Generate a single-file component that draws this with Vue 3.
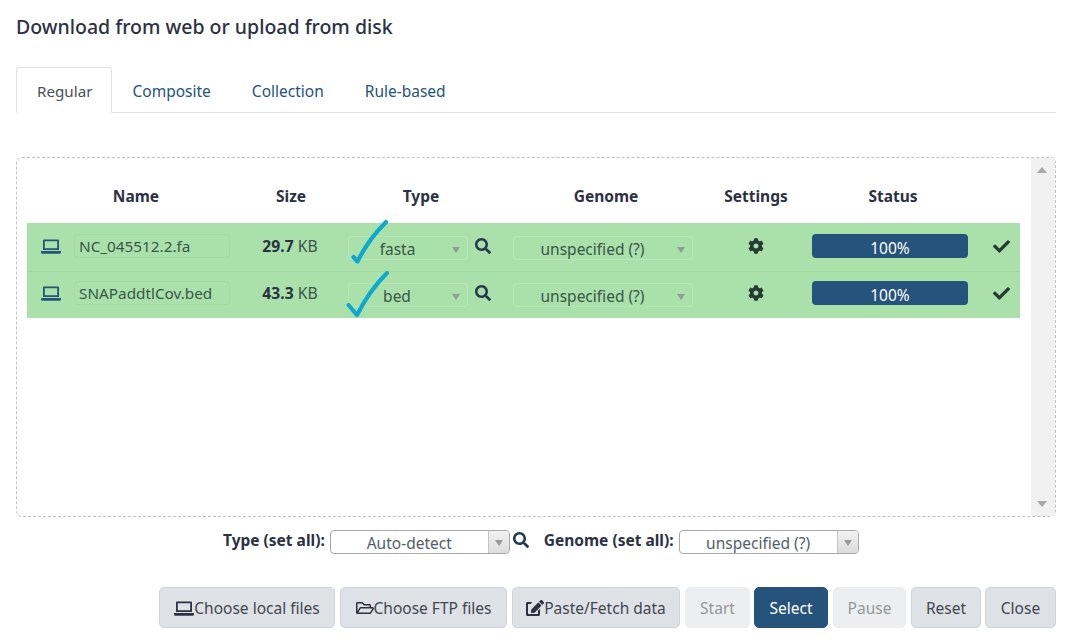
<script setup>
const rows = [
  { name: 'NC_045512.2.fa', num: '29.7', type: 'fasta', typeClass: 'type-fasta', markClass: 'mark-a', tick: 'M3.5 37 L7.5 41.5 Q18 20 36 2' },
  { name: 'SNAPaddtlCov.bed', num: '43.3', type: 'bed', typeClass: 'type-bed', markClass: 'mark-b', tick: 'M3.5 35 L12 45 Q24 21 42 3' }
]
const heads = ['Name', 'Size', 'Type', 'Genome', 'Settings', 'Status']
const tabs = ['Composite', 'Collection', 'Rule-based']
const search = 'M505 442.7L405.3 343c-4.5-4.5-10.6-7-17-7H372c27.6-35.3 44-79.7 44-128C416 93.1 322.9 0 208 0S0 93.1 0 208s93.1 208 208 208c48.3 0 92.7-16.4 128-44v16.3c0 6.4 2.5 12.5 7 17l99.7 99.7c9.4 9.4 24.6 9.4 33.9 0l28.3-28.3c9.4-9.4 9.4-24.6.1-34zM208 336c-70.7 0-128-57.2-128-128 0-70.7 57.2-128 128-128 70.7 0 128 57.2 128 128 0 70.7-57.2 128-128 128z'
const check = 'M173.898 439.404l-166.4-166.4c-9.997-9.997-9.997-26.206 0-36.204l36.203-36.204c9.997-9.998 26.207-9.998 36.204 0L192 312.69 432.095 72.596c9.997-9.997 26.207-9.997 36.204 0l36.203 36.204c9.997 9.997 9.997 26.206 0 36.204l-294.4 294.401c-9.998 9.997-26.207 9.997-36.204-.001z'
const cog = 'M487.4 315.7l-42.6-24.6c4.3-23.2 4.3-47 0-70.2l42.6-24.6c4.9-2.8 7.1-8.6 5.5-14-11.1-35.6-30-67.8-54.7-94.6-3.8-4.1-10-5.1-14.8-2.3L380.8 110c-17.9-15.4-38.5-27.3-60.8-35.1V25.8c0-5.6-3.9-10.5-9.4-11.7-36.7-8.2-74.3-7.8-109.2 0-5.5 1.2-9.4 6.1-9.4 11.7V75c-22.2 7.9-42.8 19.8-60.8 35.1L88.7 85.5c-4.9-2.8-11-1.9-14.8 2.3-24.7 26.7-43.6 58.9-54.7 94.6-1.7 5.4.6 11.2 5.5 14L67.3 221c-4.3 23.2-4.3 47 0 70.2l-42.6 24.6c-4.9 2.8-7.1 8.6-5.5 14 11.1 35.6 30 67.8 54.7 94.6 3.8 4.1 10 5.1 14.8 2.3l42.6-24.6c17.9 15.4 38.5 27.3 60.8 35.1v49.2c0 5.6 3.9 10.5 9.4 11.7 36.7 8.2 74.3 7.8 109.2 0 5.5-1.2 9.4-6.1 9.4-11.7v-49.2c22.2-7.9 42.8-19.8 60.8-35.1l42.6 24.6c4.9 2.8 11 1.9 14.8-2.3 24.7-26.7 43.6-58.9 54.7-94.6 1.5-5.5-.7-11.3-5.6-14.1zM256 336c-44.1 0-80-35.9-80-80s35.9-80 80-80 80 35.9 80 80-35.9 80-80 80z'
const folder = 'M527.9 224H480v-48c0-26.5-21.5-48-48-48H272l-64-64H48C21.5 64 0 85.5 0 112v288c0 26.5 21.5 48 48 48h400c16.5 0 31.9-8.5 40.7-22.6l79.9-128c20-31.9-3-73.4-40.7-73.4zM48 118c0-3.3 2.7-6 6-6h134.1l64 64H426c3.3 0 6 2.7 6 6v42H152c-16.8 0-32.4 8.8-41.1 23.2L48 351.4zm400 282H72l77.2-128H528z'
const edit = 'M402.6 83.2l90.2 90.2c3.8 3.8 3.8 10 0 13.8L274.4 405.6l-92.8 10.3c-12.4 1.4-22.9-9.1-21.5-21.5l10.3-92.8L388.8 83.2c3.8-3.8 10-3.8 13.8 0zm162-22.9l-48.8-48.8c-15.2-15.2-39.9-15.2-55.2 0l-35.4 35.4c-3.8 3.8-3.8 10 0 13.8l90.2 90.2c3.8 3.8 10 3.8 13.8 0l35.4-35.4c15.2-15.3 15.2-40 0-55.2zM384 346.2V448H64V128h73.1c3.2 0 6.2-1.3 8.5-3.5l40-40c7.6-7.6 2.2-20.5-8.5-20.5H48C21.5 64 0 85.5 0 112v352c0 26.5 21.5 48 48 48h352c26.5 0 48-21.5 48-48V306.2c0-10.7-12.9-16-20.5-8.5l-40 40c-2.2 2.3-3.5 5.3-3.5 8.5z'
const laptop = 'M3 2.5h14a1 1 0 0 1 1 1V13H2V3.5a1 1 0 0 1 1-1zM3.8 4.2v7.1h12.4V4.2zM0 14h20v1.2a1.5 1.5 0 0 1-1.5 1.5h-17A1.5 1.5 0 0 1 0 15.2z'
</script>

<template>
  <div class="modal">
    <h1 class="title">Download from web or upload from disk</h1>
    <nav class="tabs">
      <span class="tab active">Regular</span>
      <span v-for="t in tabs" :key="t" class="tab">{{ t }}</span>
    </nav>

    <section class="drop">
      <div class="list">
        <div class="head">
          <span v-for="h in heads" :key="h">{{ h }}</span>
        </div>
        <div class="rows">
          <div v-for="r in rows" :key="r.name" class="row">
            <span class="cell center">
              <svg class="ic-laptop" viewBox="0 0 20 18"><path :d="laptop" fill-rule="evenodd" /></svg>
            </span>
            <span class="name">{{ r.name }}</span>
            <span class="size"><b>{{ r.num }}</b> KB</span>
            <span class="select">
              <span class="sel-text" :class="r.typeClass">{{ r.type }}</span><i class="caret"></i>
            </span>
            <span class="cell search-cell">
              <svg class="ic-search" viewBox="0 0 512 512"><path :d="search" /></svg>
            </span>
            <span class="select">
              <span class="sel-text genome">unspecified (?)</span><i class="caret"></i>
            </span>
            <span class="cell gear-cell">
              <svg class="ic-gear" viewBox="0 0 512 512"><path :d="cog" /></svg>
            </span>
            <span class="bar">100%</span>
            <span class="cell check-cell">
              <svg class="ic-check" viewBox="0 0 512 512"><path :d="check" /></svg>
            </span>
            <svg class="mark" :class="r.markClass" viewBox="0 0 48 48">
              <path :d="r.tick" fill="none" stroke="#0fa8cf" stroke-width="4.2" stroke-linecap="round" stroke-linejoin="round" />
            </svg>
          </div>
        </div>
      </div>
      <aside class="scroll">
        <i class="arrow up"></i>
        <i class="arrow down"></i>
      </aside>
    </section>

    <div class="setall">
      <b>Type (set all):</b>
      <span class="box type-box"><span class="box-text">Auto-detect</span><span class="box-btn"><i class="caret"></i></span></span>
      <svg class="ic-search big" viewBox="0 0 512 512"><path :d="search" /></svg>
      <b class="genome-label">Genome (set all):</b>
      <span class="box genome-box"><span class="box-text">unspecified (?)</span><span class="box-btn"><i class="caret"></i></span></span>
    </div>

    <div class="actions">
      <button class="btn local"><svg class="btn-ic lap" viewBox="0 0 20 18"><path :d="laptop" fill-rule="evenodd" /></svg>Choose local files</button>
      <button class="btn ftp"><svg class="btn-ic" viewBox="0 0 576 512"><path :d="folder" /></svg>Choose FTP files</button>
      <button class="btn paste"><svg class="btn-ic" viewBox="0 0 576 512"><path :d="edit" /></svg>Paste/Fetch data</button>
      <button class="btn start off">Start</button>
      <button class="btn select-btn">Select</button>
      <button class="btn pause off">Pause</button>
      <button class="btn reset">Reset</button>
      <button class="btn close">Close</button>
    </div>
  </div>
</template>

<style>
html, body { margin: 0; background: #fffffe; }
</style>

<style scoped>
.modal {
  width: 1071px;
  height: 643px;
  box-sizing: border-box;
  padding: 0 15px 0 16px;
  overflow: hidden;
  font-family: "Noto Sans", "Open Sans", sans-serif;
  font-size: 15.5px;
  color: #2c3143;
  background: #fff;
}
.title {
  margin: 0;
  padding-top: 13px;
  height: 67px;
  box-sizing: border-box;
  font-size: 19.5px;
  line-height: 28px;
  font-weight: 500;
  color: #2c3143;
}
.tabs {
  display: flex;
  height: 46px;
  box-sizing: border-box;
  border-bottom: 1px solid #dee2e6;
}
.tab {
  height: 46px;
  box-sizing: border-box;
  padding: 11px 19.5px 0;
  line-height: 24px;
  font-size: 15.5px;
  color: #25537b;
  border: 1px solid transparent;
}
.tab.active {
  width: 96px;
  padding: 11px 0 0 20px;
  font-size: 15.2px;
  color: #495057;
  background: #fff;
  border-color: #dee2e6 #dee2e6 #fff;
  border-radius: 4px 4px 0 0;
}
.drop {
  margin-top: 44px;
  height: 360px;
  box-sizing: border-box;
  display: flex;
  border: 1px dashed #bfc3c7;
  border-radius: 6px;
  background: #fff;
}
.list {
  flex: 1;
  padding: 0 10px;
}
.head {
  display: grid;
  grid-template-columns: 218px 92px 168px 202px 98px 176px;
  height: 65px;
  align-items: center;
  padding-top: 11px;
  box-sizing: border-box;
  text-align: center;
  font-weight: 700;
  font-size: 15.5px;
  color: #2c3143;
}
.rows {
  width: 993px;
  background: #aae1aa;
}
.row {
  position: relative;
  display: grid;
  box-sizing: border-box;
  grid-template-columns: 47px 156px 118px 120px 45px 180px 119px 156px 52px;
  align-items: center;
  height: 48px;
  padding-bottom: 2px;
  color: #2c4a3c;
}
.row + .row {
  height: 47px;
  padding-bottom: 4px;
  border-top: 1px solid #9fd69f;
}
.center { display: flex; justify-content: center; }
.ic-laptop { width: 20px; height: 18px; fill: #25537b; }
.name {
  height: 24px;
  box-sizing: border-box;
  padding-left: 4px;
  line-height: 22px;
  font-size: 15.3px;
  border: 1px solid #a3daa3;
  border-radius: 4px;
  color: #38564a;
  white-space: nowrap;
  overflow: hidden;
}
.size {
  text-align: center;
  padding-left: 2px;
  font-size: 15.7px;
  color: #38564a;
}
.size b { color: #2c3143; }
.select {
  position: relative;
  display: block;
  height: 24px;
  margin-top: 4px;
  box-sizing: border-box;
  border: 1px solid #b9e6b9;
  border-radius: 4px;
  line-height: 24px;
}
.sel-text { display: block; font-size: 15.5px; color: #38564a; text-align: center; }
.type-fasta { padding-right: 21px; }
.type-bed { padding-right: 22px; }
.genome { padding-right: 21px; }
.select .caret { position: absolute; right: 7px; top: 10px; }
.caret {
  display: block;
  width: 0;
  height: 0;
  border-left: 4px solid transparent;
  border-right: 4px solid transparent;
  border-top: 6px solid #8aa090;
}
.search-cell { display: flex; padding: 0 0 1px 7px; }
.ic-search { width: 16px; height: 16px; fill: #243a52; }
.gear-cell { display: flex; justify-content: center; padding: 0 0 1px 6px; }
.ic-gear { width: 16px; height: 16px; fill: #243a35; }
.bar {
  height: 24px;
  margin-top: 0;
  border-radius: 4px;
  background: #25537b;
  color: #fff;
  text-align: center;
  line-height: 28px;
  font-size: 15.5px;
}
.check-cell { display: flex; justify-content: flex-end; padding: 0 10px 0 0; }
.ic-check { width: 17px; height: 17px; fill: #243a35; }
.mark { position: absolute; width: 48px; height: 48px; }
.mark-a { left: 323px; top: -3px; }
.mark-b { left: 318px; top: -2px; }
.scroll {
  position: relative;
  width: 24px;
  background: #f1f1f1;
}
.arrow {
  position: absolute;
  left: 6px;
  width: 0;
  height: 0;
  border-left: 5px solid transparent;
  border-right: 5px solid transparent;
}
.arrow.up { top: 9px; border-bottom: 6px solid #a8a8a8; }
.arrow.down { bottom: 9px; border-top: 6px solid #a8a8a8; }
.setall {
  display: flex;
  align-items: flex-start;
  height: 70px;
  padding: 12px 0 0 207px;
  box-sizing: border-box;
  font-size: 15.5px;
  line-height: 23px;
  color: #2c3143;
}
.box {
  position: relative;
  display: block;
  height: 24px;
  box-sizing: border-box;
  margin-top: 1px;
  border: 1px solid #a9a9a9;
  border-radius: 4px;
  background: #fff;
  color: #555d66;
  font-size: 15.5px;
  line-height: 23px;
}
.type-box { width: 180px; margin-left: 5px; }
.genome-box { width: 180px; margin-left: 5px; }
.box-text { display: block; text-align: center; padding-right: 21px; line-height: 24px; }
.box-btn {
  position: absolute;
  right: 0;
  top: 0;
  bottom: 0;
  width: 21px;
  box-sizing: border-box;
  border-left: 1px solid #c4c4c4;
  border-radius: 0 3px 3px 0;
  background: linear-gradient(#f2f2f2, #dcdcdc);
  display: flex;
  align-items: center;
  justify-content: center;
  padding-top: 2px;
}
.box-btn .caret { border-top-color: #9a9a9a; }
.ic-search.big { width: 16px; height: 16px; margin: 3px 0 0 3px; fill: #243a52; }
.genome-label { margin-left: 15px; }
.actions {
  display: flex;
  justify-content: flex-end;
  gap: 5px;
}
.btn {
  height: 41px;
  box-sizing: border-box;
  padding: 0;
  display: flex;
  align-items: center;
  justify-content: center;
  font: 400 15.5px/24px "Noto Sans", "Open Sans", sans-serif;
  color: #41464f;
  background: #dee2e6;
  border: 1px solid #cfd3d8;
  border-radius: 5px;
}
.btn-ic { height: 16px; width: 18px; fill: #2c3143; }
.btn-ic.lap { width: 20px; height: 18px; }
.local { width: 176px; }
.ftp { width: 167px; }
.paste { width: 168px; }
.start { width: 65px; }
.select-btn { width: 74px; margin-left: -1px; background: #25537b; border-color: #25537b; color: #fff; }
.pause { width: 73px; }
.reset { width: 70px; }
.close { width: 71px; margin-left: -1px; }
.off { background: #eceef0; border-color: #eceef0; color: #93979c; }
</style>
